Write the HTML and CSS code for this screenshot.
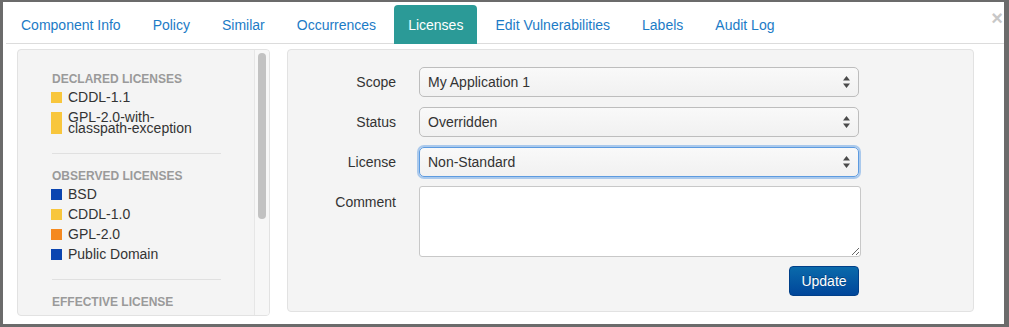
FILE: index.html
```html
<!DOCTYPE html>
<html>
<head>
<meta charset="utf-8">
<link rel="stylesheet" href="styles.css">
</head>
<body>
<div class="modal">
  <span class="close">×</span>
  <ul class="tabs">
    <li class="tab">Component Info</li>
    <li class="tab">Policy</li>
    <li class="tab">Similar</li>
    <li class="tab">Occurrences</li>
    <li class="tab active">Licenses</li>
    <li class="tab">Edit Vulnerabilities</li>
    <li class="tab">Labels</li>
    <li class="tab">Audit Log</li>
  </ul>
  <div class="content">
    <div class="side">
      <div class="side-inner">
        <div class="heading">DECLARED LICENSES</div>
        <div class="item"><span class="sq yellow"></span><span class="name">CDDL-1.1</span></div>
        <div class="item"><span class="sq yellow"></span><span class="name two"><span class="ln">GPL-2.0-with-</span><span class="ln">classpath-exception</span></span></div>
        <div class="divider"></div>
        <div class="heading">OBSERVED LICENSES</div>
        <div class="item"><span class="sq blue"></span><span class="name">BSD</span></div>
        <div class="item"><span class="sq yellow"></span><span class="name">CDDL-1.0</span></div>
        <div class="item"><span class="sq orange"></span><span class="name">GPL-2.0</span></div>
        <div class="item"><span class="sq blue"></span><span class="name">Public Domain</span></div>
        <div class="divider"></div>
        <div class="heading">EFFECTIVE LICENSE</div>
        <div class="item"><span class="sq blue"></span><span class="name">BSD</span></div>
      </div>
      <div class="track"><div class="thumb"></div></div>
    </div>
    <div class="main">
      <div class="form">
        <label class="lbl">Scope</label>
        <div class="select"><span>My Application 1</span>
          <svg class="arrows" width="7" height="12" viewBox="0 0 7 12"><path d="M3.5 0 L7 4.5 L0 4.5 Z M0 7.5 L7 7.5 L3.5 12 Z" fill="#4a4a4a"/></svg>
        </div>
        <label class="lbl">Status</label>
        <div class="select"><span>Overridden</span>
          <svg class="arrows" width="7" height="12" viewBox="0 0 7 12"><path d="M3.5 0 L7 4.5 L0 4.5 Z M0 7.5 L7 7.5 L3.5 12 Z" fill="#4a4a4a"/></svg>
        </div>
        <label class="lbl">License</label>
        <div class="select focus"><span>Non-Standard</span>
          <svg class="arrows" width="7" height="12" viewBox="0 0 7 12"><path d="M3.5 0 L7 4.5 L0 4.5 Z M0 7.5 L7 7.5 L3.5 12 Z" fill="#4a4a4a"/></svg>
        </div>
        <label class="lbl top">Comment</label>
        <textarea class="comment"></textarea>
        <div></div>
        <div class="actions"><button class="btn">Update</button></div>
      </div>
    </div>
  </div>
</div>
</body>
</html>
```

FILE: styles.css
```css
* { box-sizing: border-box; }
html, body { margin: 0; padding: 0; }
body {
  background: #6b6b6b;
  padding: 2px 5px 3px 3px;
  font-family: "Liberation Sans", Arial, sans-serif;
  font-size: 14px;
  color: #333;
  height: 327px;
  overflow: hidden;
}
.modal {
  position: relative;
  background: #fff;
  height: 322px;
  overflow: hidden;
}
.close {
  position: absolute;
  right: 1px;
  top: 6px;
  font-size: 20px;
  font-weight: bold;
  color: #c8c8c8;
  line-height: 20px;
}
.tabs {
  list-style: none;
  margin: 0 0 0 3px;
  padding: 3px 0 0 1px;
  display: flex;
  align-items: flex-end;
  border-bottom: 1px solid #dcdcdc;
}
.tab {
  height: 39px;
  margin-bottom: -1px;
  margin-right: 4px;
  padding: 0 14px;
  display: flex;
  align-items: center;
  color: #1c7bc6;
  border-radius: 4px 4px 0 0;
  white-space: nowrap;
}
.tab.active {
  background: #2b9a97;
  color: #fff;
}
.content {
  display: flex;
  align-items: flex-start;
  gap: 17px;
  padding: 5px 30px 0 14px;
}
.side {
  width: 253px;
  height: 267px;
  flex: none;
  display: flex;
  background: #f4f4f4;
  border: 1px solid #e2e2e2;
  border-radius: 4px;
  overflow: hidden;
}
.side-inner {
  flex: 1;
  padding: 22px 33px 0 33px;
  overflow: hidden;
}
.heading {
  font-size: 12px;
  line-height: 14px;
  font-weight: bold;
  color: #9a9a9a;
  padding-left: 1px;
  margin-bottom: 6px;
  white-space: nowrap;
}
.item {
  display: flex;
  line-height: 11px;
  margin-bottom: 9px;
  color: #333;
}
.name.two {
  display: flex;
  flex-direction: column;
}
.ln {
  display: block;
  height: 11px;
  overflow: visible;
}
.sq {
  width: 11px;
  flex: none;
  margin-right: 6px;
}
.yellow { background: #f8c63c; }
.blue { background: #0b45b0; }
.orange { background: #f5891f; }
.divider {
  height: 1px;
  background: #e0e0e0;
  margin: 19px 0 15px 1px;
}
.track {
  width: 15px;
  flex: none;
  border-left: 1px solid #e6e6e6;
  background: #f7f7f7;
  padding: 3px 0 0 3px;
}
.thumb {
  width: 8px;
  height: 166px;
  background: #c2c2c2;
  border-radius: 4px;
}
.main {
  width: 687px;
  height: 263px;
  flex: none;
  background: #f4f4f4;
  border: 1px solid #e2e2e2;
  border-radius: 4px;
}
.form {
  display: grid;
  grid-template-columns: 108px 442px;
  column-gap: 23px;
  row-gap: 10px;
  padding-top: 17px;
}
.lbl {
  text-align: right;
  align-self: center;
  line-height: 20px;
}
.lbl.top {
  align-self: start;
  padding-top: 5px;
}
.select {
  width: 440px;
  height: 30px;
  border: 1px solid #bdbdbd;
  border-radius: 5px;
  background: linear-gradient(#f9f9f9, #f1f1f1);
  display: flex;
  align-items: center;
  justify-content: space-between;
  padding: 0 8px 0 8px;
}
.select.focus {
  border: 1px solid #5d9be0;
  box-shadow: 0 0 0 2px rgba(110, 165, 230, 0.55);
}
.arrows { display: block; }
.comment {
  width: 442px;
  height: 71px;
  margin: -1px 0 -1px 0;
  border: 1px solid #c8c8c8;
  border-radius: 3px;
  background: #fff;
  font-family: inherit;
  font-size: 14px;
  resize: both;
  display: block;
}
.actions {
  width: 440px;
  display: flex;
  justify-content: flex-end;
}
.btn {
  width: 70px;
  height: 30px;
  border: 1px solid #003f88;
  border-radius: 4px;
  background: linear-gradient(#0a6aab, #00469a);
  color: #fff;
  font-family: inherit;
  font-size: 14px;
  text-shadow: 0 -1px 0 rgba(0, 0, 0, 0.3);
  padding: 0;
}
```
